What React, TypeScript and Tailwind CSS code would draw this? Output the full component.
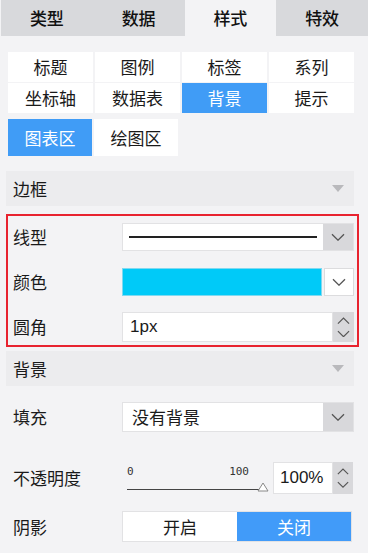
import React from 'react';

const font = { fontFamily: '"Noto Sans CJK SC", "Liberation Sans", sans-serif' };

const Chevron: React.FC<{ up?: boolean; size?: number }> = ({ up, size = 14 }) => (
  <svg width={size} height={size * 0.6} viewBox="0 0 14 8" fill="none">
    <path d={up ? 'M1 7 L7 1 L13 7' : 'M1 1 L7 7 L13 1'} stroke="#555" strokeWidth="1.3" />
  </svg>
);

const Caret = () => (
  <svg width="12" height="7" viewBox="0 0 12 7">
    <path d="M0 0 H12 L6 7 Z" fill="#b9b9bc" />
  </svg>
);

const SectionHeader: React.FC<{ title: string }> = ({ title }) => (
  <div className="flex items-center justify-between w-[348px] h-[35px] ml-[6px] pl-[7px] pr-[10px] bg-[#ececee] text-[17px] text-[#1a1a1a]">
    <span>{title}</span>
    <Caret />
  </div>
);

const Row: React.FC<{ label: string; children: React.ReactNode; className?: string }> = ({ label, children, className }) => (
  <div className={`flex items-center ${className ?? ''}`}>
    <span className="w-[109px] text-[17px] text-[#1a1a1a]">{label}</span>
    {children}
  </div>
);

const SelectBox: React.FC<{ children: React.ReactNode; h?: string }> = ({ children, h = 'h-[28px]' }) => (
  <div className={`flex w-[232px] ${h} bg-white border border-[#e2e2e4]`}>
    <div className="flex-1 flex items-center px-[6px]">{children}</div>
    <div className="w-[30px] flex items-center justify-center bg-[#d8d8db]">
      <Chevron />
    </div>
  </div>
);

const tabs = ['类型', '数据', '样式', '特效'];
const sub1 = ['标题', '图例', '标签', '系列', '坐标轴', '数据表', '背景', '提示'];

export default function App() {
  return (
    <div className="w-[368px] h-[553px] bg-[#f3f3f5] overflow-hidden" style={font}>
      {/* 顶部标签 */}
      <div className="flex h-[36px] bg-[#d8d9dc] ml-[1px]">
        {tabs.map((t, i) => (
          <div
            key={t}
            className={`w-[92px] flex items-center justify-center text-[17px] font-medium text-[#111] ${i === 2 ? 'bg-[#f3f3f5]' : ''}`}
          >
            {t}
          </div>
        ))}
      </div>

      {/* 子标签 */}
      <div className="grid grid-cols-4 gap-x-[2px] gap-y-[1px] w-[346px] ml-[8px] mt-[16px]">
        {sub1.map((t) => (
          <div
            key={t}
            className={`h-[30px] flex items-center justify-center text-[17px] ${t === '背景' ? 'bg-[#409cf6] text-white' : 'bg-white text-[#1a1a1a]'}`}
          >
            {t}
          </div>
        ))}
      </div>
      <div className="flex gap-[2px] ml-[8px] mt-[6px]">
        <div className="w-[84px] h-[37px] flex items-center justify-center text-[17px] bg-[#409cf6] text-white">图表区</div>
        <div className="w-[84px] h-[37px] flex items-center justify-center text-[17px] bg-white text-[#1a1a1a]">绘图区</div>
      </div>

      <div className="mt-[15px]">
        <SectionHeader title="边框" />
      </div>

      {/* 边框设置 */}
      <div className="w-[353px] ml-[6px] mt-[8px] border-2 border-[#e8232f] pl-[5px] pt-[7px] pb-[3px]">
        <Row label="线型">
          <SelectBox>
            <div className="w-full h-[1.5px] bg-[#222]" />
          </SelectBox>
        </Row>
        <Row label="颜色" className="mt-[17px]">
          <div className="flex w-[232px] h-[28px]">
            <div className="flex-1 bg-[#00caf8] border border-[#7fd9f0]" />
            <div className="w-[30px] ml-[2px] flex items-center justify-center bg-white border border-[#dcdcde]">
              <Chevron />
            </div>
          </div>
        </Row>
        <Row label="圆角" className="mt-[16px]">
          <div className="flex w-[232px] h-[30px]">
            <div className="flex-1 flex items-center bg-white border border-[#e2e2e4] pl-[7px] text-[17px] text-[#1a1a1a]" style={{ fontFamily: '"Liberation Sans", sans-serif' }}>
              1px
            </div>
            <div className="w-[21px] flex flex-col items-center justify-center gap-[5px] bg-[#d8d8db]">
              <Chevron up size={13} />
              <Chevron size={13} />
            </div>
          </div>
        </Row>
      </div>

      <div className="mt-[4px]">
        <SectionHeader title="背景" />
      </div>

      <div className="pl-[13px]">
        <Row label="填充" className="mt-[16px]">
          <SelectBox h="h-[30px]">
            <span className="text-[17px] text-[#1a1a1a] pl-[3px]">没有背景</span>
          </SelectBox>
        </Row>

        <Row label="不透明度" className="mt-[30px]">
          <div className="flex items-center">
            <div className="w-[146px] h-[32px] flex flex-col ml-[5px]">
              <div className="flex justify-between w-[122px] text-[11px] leading-[14px] text-[#333] mt-[3px]" style={{ fontFamily: '"DejaVu Sans Mono", monospace' }}>
                <span>0</span>
                <span>100</span>
              </div>
              <div className="flex items-end mt-[3px]">
                <div className="w-[132px] h-[1px] bg-[#444] mb-[2px]" />
                <svg width="12" height="10" viewBox="0 0 12 10" className="-ml-[2px]">
                  <path d="M6 1 L11 9 H1 Z" fill="#fff" stroke="#888" strokeWidth="1" />
                </svg>
              </div>
            </div>
            <div className="flex h-[32px]">
              <div className="w-[60px] flex items-center bg-white border border-[#e2e2e4] pl-[6px] text-[17px] text-[#1a1a1a]" style={{ fontFamily: '"Liberation Sans", sans-serif' }}>
                100%
              </div>
              <div className="w-[20px] flex flex-col items-center justify-center gap-[5px] bg-[#d8d8db]">
                <Chevron up size={12} />
                <Chevron size={12} />
              </div>
            </div>
          </div>
        </Row>

        <Row label="阴影" className="mt-[17px]">
          <div className="flex w-[230px] h-[31px] border border-[#e2e2e4]">
            <div className="flex-1 flex items-center justify-center bg-white text-[17px] text-[#1a1a1a]">开启</div>
            <div className="flex-1 flex items-center justify-center bg-[#419bf9] text-[17px] text-white">关闭</div>
          </div>
        </Row>
      </div>
    </div>
  );
}
